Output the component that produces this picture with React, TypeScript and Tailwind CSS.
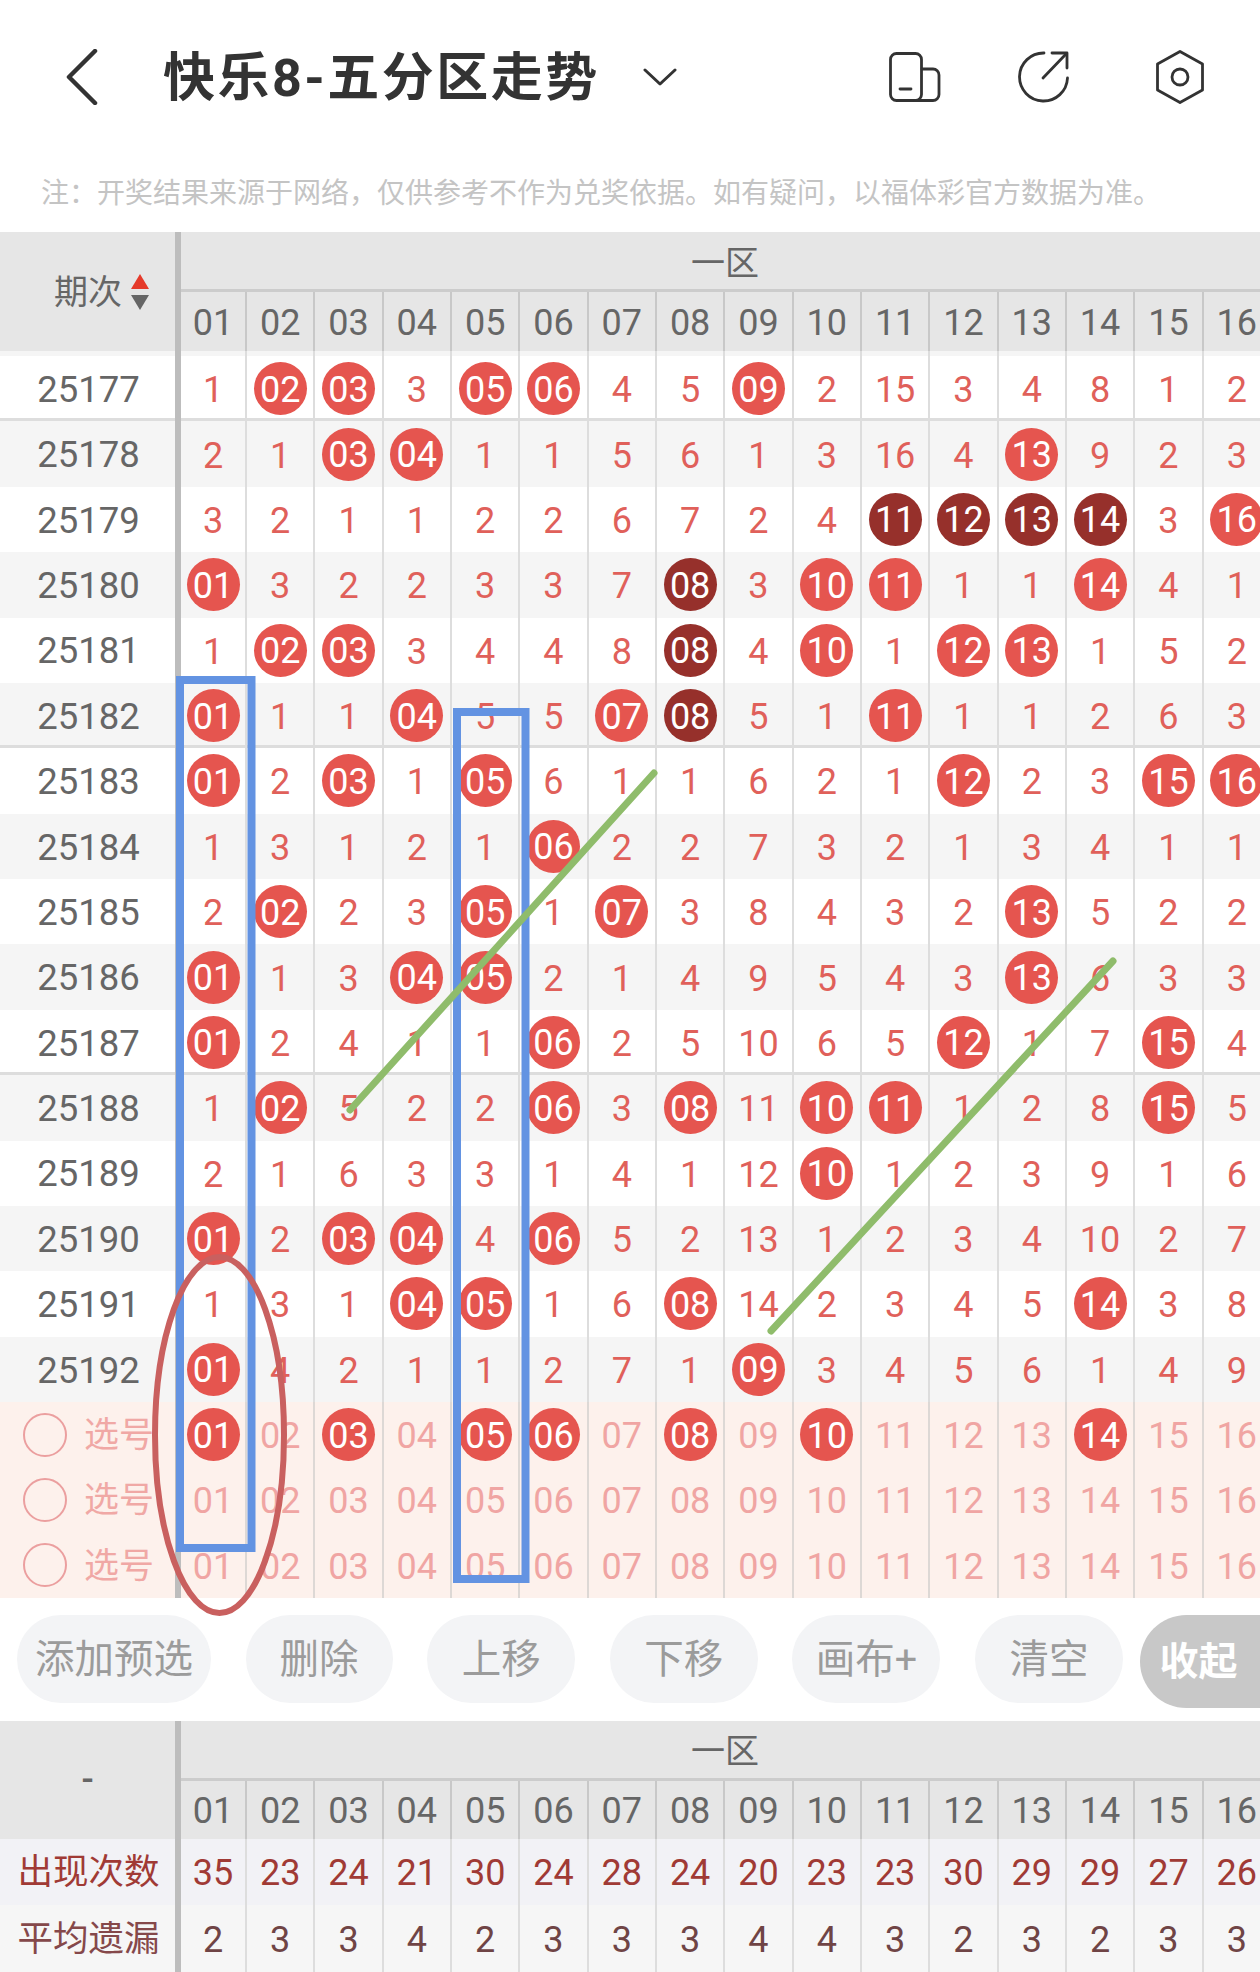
const rows: [string, string, boolean][] = [
  ["25177", "1 02* 03* 3 05* 06* 4 5 09* 2 15 3 4 8 1 2", true],
  ["25178", "2 1 03* 04* 1 1 5 6 1 3 16 4 13* 9 2 3", false],
  ["25179", "3 2 1 1 2 2 6 7 2 4 11# 12# 13# 14# 3 16*", false],
  ["25180", "01* 3 2 2 3 3 7 08# 3 10* 11* 1 1 14* 4 1", false],
  ["25181", "1 02* 03* 3 4 4 8 08# 4 10* 1 12* 13* 1 5 2", false],
  ["25182", "01* 1 1 04* 5 5 07* 08# 5 1 11* 1 1 2 6 3", true],
  ["25183", "01* 2 03* 1 05* 6 1 1 6 2 1 12* 2 3 15* 16*", false],
  ["25184", "1 3 1 2 1 06* 2 2 7 3 2 1 3 4 1 1", false],
  ["25185", "2 02* 2 3 05* 1 07* 3 8 4 3 2 13* 5 2 2", false],
  ["25186", "01* 1 3 04* 05* 2 1 4 9 5 4 3 13* 6 3 3", false],
  ["25187", "01* 2 4 1 1 06* 2 5 10 6 5 12* 1 7 15* 4", true],
  ["25188", "1 02* 5 2 2 06* 3 08* 11 10* 11* 1 2 8 15* 5", false],
  ["25189", "2 1 6 3 3 1 4 1 12 10* 1 2 3 9 1 6", false],
  ["25190", "01* 2 03* 04* 4 06* 5 2 13 1 2 3 4 10 2 7", false],
  ["25191", "1 3 1 04* 05* 1 6 08* 14 2 3 4 5 14* 3 8", false],
  ["25192", "01* 4 2 1 1 2 7 1 09* 3 4 5 6 1 4 9", false],
];

const plainNums = "01 02 03 04 05 06 07 08 09 10 11 12 13 14 15 16";
const picks = [
  "01* 02 03* 04 05* 06* 07 08* 09 10* 11 12 13 14* 15 16",
  plainNums,
  plainNums,
];
const buttons = [
  { label: "添加预选", w: "w-[194px]" },
  { label: "删除", w: "w-[147px]" },
  { label: "上移", w: "w-[148px]" },
  { label: "下移", w: "w-[148px]" },
  { label: "画布+", w: "w-[148px]" },
  { label: "清空", w: "w-[148px]" },
];

function Cells({ values, text, line }: { values: string; text: string; line: string }) {
  return (
    <div className="flex h-full">
      {values.split(" ").map((v, i) => {
        const hot = v.endsWith("*");
        const dark = v.endsWith("#");
        const label = v.replace(/[*#]/, "");
        return (
          <div
            key={i}
            className={`flex h-full shrink-0 items-center justify-center border-r-2 ${line} ${
              i === 0 ? "w-[66px]" : "w-[68.33px]"
            }`}
          >
            {hot || dark ? (
              <span
                className={`flex h-[53px] w-[53px] items-center justify-center rounded-full pt-[2px] text-[36px] leading-none text-white ${
                  dark ? "bg-[#96302b]" : "bg-[#e5554f]"
                }`}
              >
                {label}
              </span>
            ) : (
              <span className={`pt-[3px] text-[36px] leading-none ${text}`}>{label}</span>
            )}
          </div>
        );
      })}
    </div>
  );
}

function HeadRight({ low }: { low: string }) {
  return (
    <div className="min-w-0 flex-1 overflow-hidden">
      <div className="flex h-[60px] items-center border-b-[3px] border-[#cccccc] pl-[510px] pt-[4px] text-[34px] leading-none text-[#666666]">
        一区
      </div>
      <div className={low}>
        <Cells values={plainNums} text="text-[#666666]" line="border-[#c8c8c8]" />
      </div>
    </div>
  );
}

function Bar() {
  return <div className="w-[6px] shrink-0 self-stretch bg-[#bdbdbd]" />;
}

export default function App() {
  return (
    <div className="relative h-[1972px] w-[1260px] overflow-hidden bg-white font-['Roboto','Noto_Sans_CJK_SC',sans-serif]">
      {/* Nav */}
      <div className="flex h-[154px] items-center">
        <svg className="ml-[66px] shrink-0" width="32" height="56" viewBox="0 0 32 56" fill="none" stroke="#333333" strokeWidth="4.5" strokeLinecap="round" strokeLinejoin="round">
          <path d="M29 2 L3 28 L29 54" />
        </svg>
        <div className="ml-[65px] w-[470px] shrink-0 pt-[4px] text-[52px] font-bold leading-none tracking-[2.5px] text-[#333333]">
          快乐8-五分区走势
        </div>
        <svg className="ml-[10px] shrink-0" width="34" height="18" viewBox="0 0 34 18" fill="none" stroke="#333333" strokeWidth="3" strokeLinecap="round" strokeLinejoin="round">
          <path d="M2 2 L17 16 L32 2" />
        </svg>
        <svg className="ml-[212px] shrink-0" width="52" height="50" viewBox="0 0 52 50" fill="none" stroke="#333333" strokeWidth="2.8" strokeLinecap="round" strokeLinejoin="round">
          <rect x="1.5" y="1.5" width="31" height="47" rx="6" />
          <path d="M33 17 H44 a6 6 0 0 1 6 6 V42.5 a6 6 0 0 1 -6 6 H26" />
          <path d="M11 37 H22" />
        </svg>
        <svg className="ml-[77px] shrink-0" width="52" height="52" viewBox="0 0 52 52" fill="none" stroke="#333333" strokeWidth="2.8" strokeLinecap="round" strokeLinejoin="round">
          <path d="M26 2 A24 24 0 1 0 49.5 27" />
          <path d="M25 27 L48 3" />
          <path d="M34 2 H49 V17" />
        </svg>
        <svg className="ml-[85px] shrink-0" width="50" height="54" viewBox="0 0 50 54" fill="none" stroke="#333333" strokeWidth="2.8" strokeLinecap="round" strokeLinejoin="round">
          <path d="M25 1.5 L47.5 14 V40 L25 52.5 L2.5 40 V14 Z" />
          <circle cx="25" cy="27" r="8" />
        </svg>
      </div>

      {/* Note */}
      <div className="flex h-[78px] items-center pl-[41px] pt-[2px] text-[28px] leading-none text-[#c4c4c4]">
        注：开奖结果来源于网络，仅供参考不作为兑奖依据。如有疑问，以福体彩官方数据为准。
      </div>

      {/* Table head */}
      <div className="flex h-[119px] bg-[#e6e6e6]">
        <div className="flex w-[175px] shrink-0 items-center gap-[9px] pl-[54px]">
          <span className="text-[34px] leading-none text-[#666666]">期次</span>
          <svg width="18" height="36" viewBox="0 0 18 36">
            <path d="M9 0 L18 15 H0 Z" fill="#e53a2a" />
            <path d="M0 21 H18 L9 36 Z" fill="#666666" />
          </svg>
        </div>
        <Bar />
        <HeadRight low="h-[59px]" />
      </div>

      {/* Band under the head */}
      <div className="flex h-[5px] overflow-hidden bg-[#f5f5f5]">
        <div className="w-[175px] shrink-0" />
        <Bar />
        <div className="min-w-0 flex-1">
          <Cells values={plainNums.replace(/\d+/g, "")} text="" line="border-[#dddddd]" />
        </div>
      </div>

      {/* Draw rows */}
      {rows.map(([issue, values, ruled], i) => (
        <div
          key={issue}
          className={`flex h-[65.38px] ${i % 2 === 1 ? "bg-[#f5f5f5]" : "bg-white"} ${
            ruled ? "shadow-[inset_0_-3px_0_#dddddd]" : ""
          }`}
        >
          <div className="flex w-[175px] shrink-0 items-center justify-center pl-[2px] pt-[3px] text-[36.5px] leading-none text-[#666666]">
            {issue}
          </div>
          <Bar />
          <div className="min-w-0 flex-1 overflow-hidden">
            <Cells values={values} text="text-[#e0605a]" line="border-[#dddddd]" />
          </div>
        </div>
      ))}

      {/* Pick rows */}
      {picks.map((values, i) => (
        <div key={i} className="flex h-[65.33px] bg-[#fdf1ec]">
          <div className="flex w-[175px] shrink-0 items-center pl-[23px]">
            <span className="h-[44px] w-[44px] shrink-0 rounded-full border-[2.5px] border-[#eb9f9f]" />
            <span className="ml-[17px] pt-[2px] text-[35px] leading-none text-[#f0a8a5]">选号</span>
          </div>
          <Bar />
          <div className="min-w-0 flex-1 overflow-hidden">
            <Cells values={values} text="text-[#f0a5a3]" line="border-[#ddd8d5]" />
          </div>
        </div>
      ))}

      {/* Buttons */}
      <div className="flex h-[123px] items-start gap-[34.6px] overflow-hidden pl-[17px] pt-[17px]">
        {buttons.map((b) => (
          <div
            key={b.label}
            className={`flex h-[88px] shrink-0 items-center justify-center rounded-full bg-[#f3f4f6] pt-[2px] text-[39.5px] leading-none text-[#9b9b9b] ${b.w}`}
          >
            {b.label}
          </div>
        ))}
        <div className="ml-[-18px] flex h-[93px] w-[140px] shrink-0 items-center rounded-l-full bg-[#c8c8c8] pl-[20px] pt-[2px] text-[39px] font-bold leading-none text-white">
          收起
        </div>
      </div>

      {/* Stats head */}
      <div className="flex h-[118px] bg-[#e6e6e6]">
        <div className="flex w-[175px] shrink-0 items-center justify-center text-[36px] font-medium leading-none text-[#666666]">
          -
        </div>
        <Bar />
        <HeadRight low="h-[58px]" />
      </div>

      {/* Stats rows */}
      <div className="flex h-[66px] bg-[#f2f2f6]">
        <div className="flex w-[175px] shrink-0 items-center justify-center pl-[2px] pt-[2px] text-[35.5px] leading-none text-[#a03a35]">
          出现次数
        </div>
        <Bar />
        <div className="min-w-0 flex-1 overflow-hidden">
          <Cells values="35 23 24 21 30 24 28 24 20 23 23 30 29 29 27 26" text="text-[#a03a35]" line="border-[#dddddd]" />
        </div>
      </div>
      <div className="flex h-[67px] bg-[#f6f6f6]">
        <div className="flex w-[175px] shrink-0 items-center justify-center pl-[2px] pt-[2px] text-[35.5px] leading-none text-[#85484a]">
          平均遗漏
        </div>
        <Bar />
        <div className="min-w-0 flex-1 overflow-hidden">
          <Cells values="2 3 3 4 2 3 3 3 4 4 3 2 3 2 3 3" text="text-[#6f4445]" line="border-[#dddddd]" />
        </div>
      </div>

      {/* Hand-drawn marks on top of the table */}
      <svg className="pointer-events-none absolute left-0 top-0" width="1260" height="1972" viewBox="0 0 1260 1972" fill="none">
        <rect x="180" y="680" width="71.5" height="868" stroke="#6393e2" strokeWidth="8" />
        <rect x="457" y="712" width="68.5" height="867" stroke="#6393e2" strokeWidth="8" />
        <path d="M350 1110 L654 773" stroke="#8fbc6b" strokeWidth="7" strokeLinecap="round" />
        <path d="M771 1331 L1113 961" stroke="#8fbc6b" strokeWidth="7" strokeLinecap="round" />
        <ellipse cx="219.5" cy="1435" rx="64.5" ry="178" stroke="#c9605f" strokeWidth="6" />
      </svg>
    </div>
  );
}
